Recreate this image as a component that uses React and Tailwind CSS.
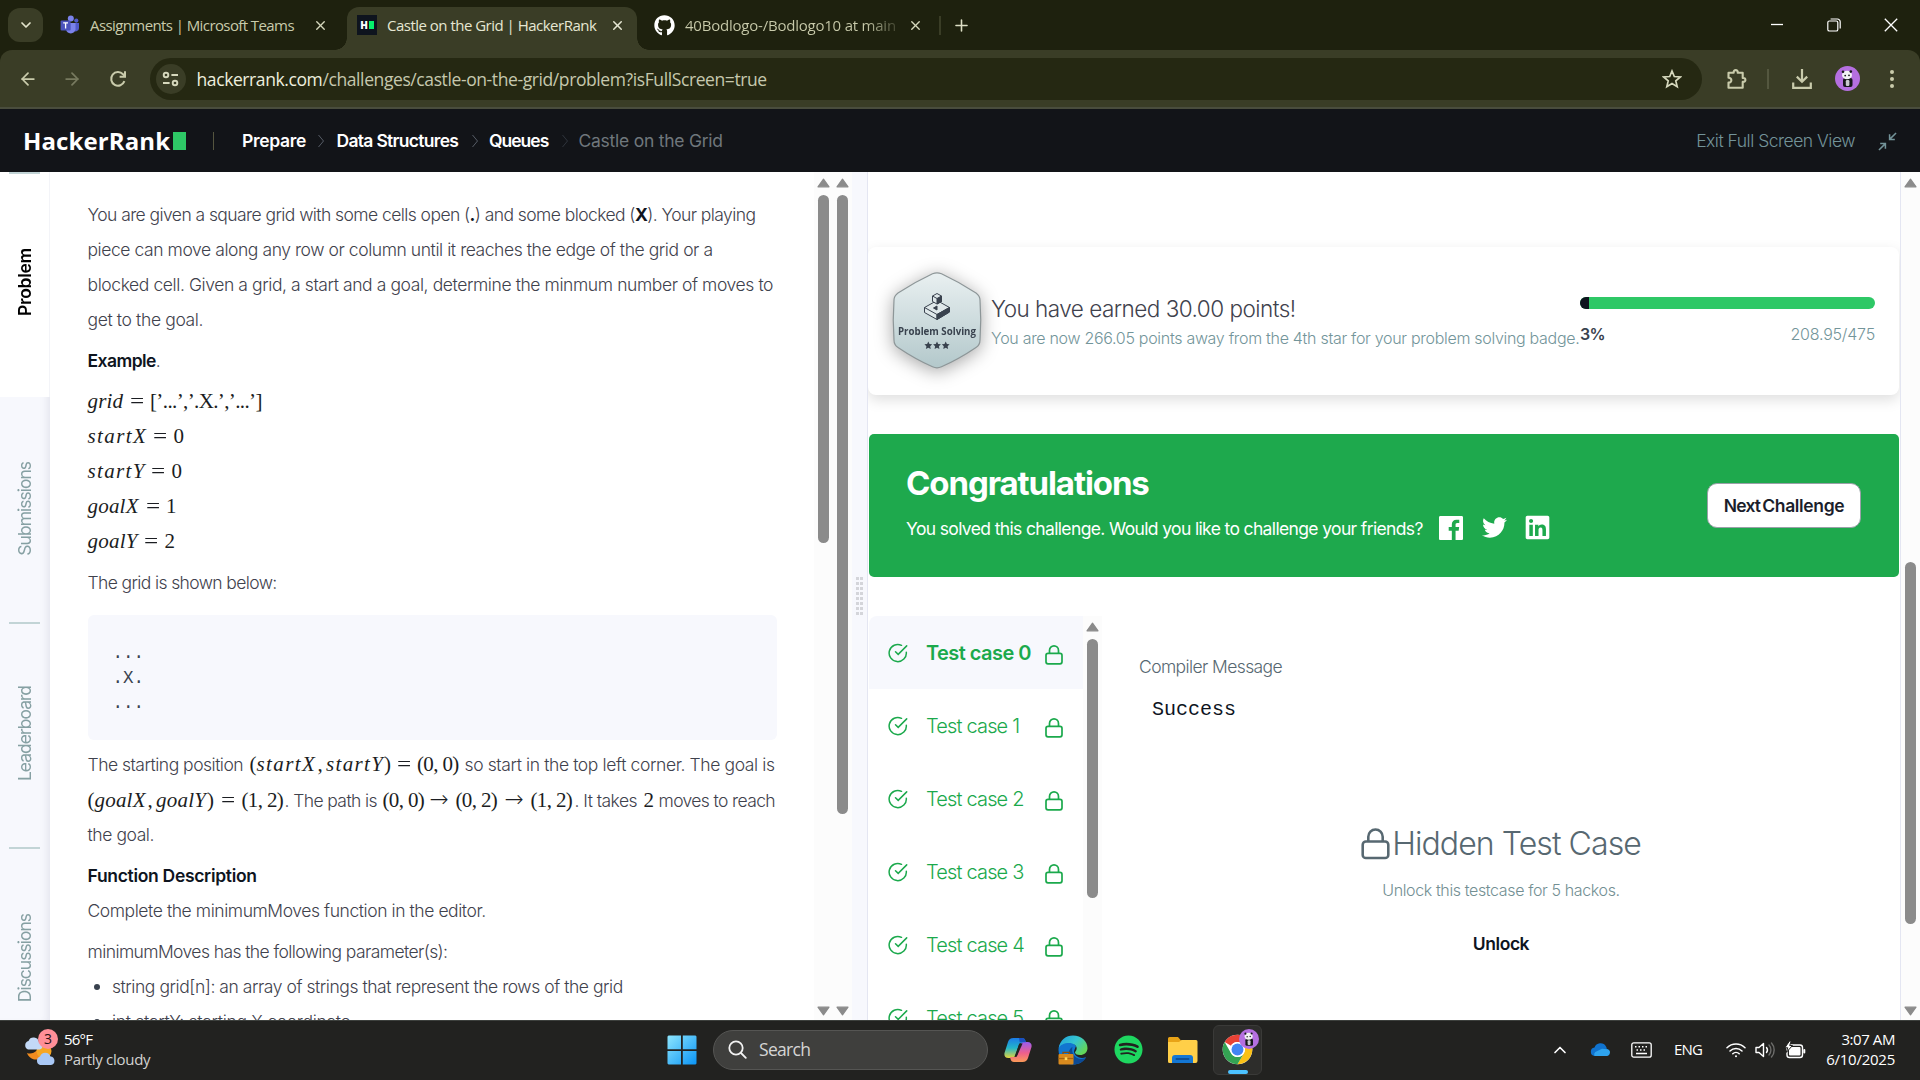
import { ArrowLeft, ArrowRight, ChevronDown, ChevronUp, Plus, X } from "lucide-react";
import { FaGithub, FaLinkedin, FaSpotify, FaTwitter } from "react-icons/fa";

/* ---------- browser chrome ---------- */

function TeamsIcon() {
  return (
    <svg width="20" height="20" viewBox="0 0 20 20">
      <circle cx="16.3" cy="5.6" r="2.1" fill="#5059c9" />
      <circle cx="10.8" cy="3.6" r="3" fill="#7b83eb" />
      <path d="M13 8h6v5.2a3.2 3.2 0 0 1-6 1.6z" fill="#5059c9" />
      <path d="M6 8h9.5v6.3a4.8 4.8 0 0 1-9.5 0z" fill="#7b83eb" />
      <rect x="0.6" y="5.4" width="10" height="10" rx="1" fill="#4b53bc" />
      <path d="M3.2 7.8h4.8M5.6 7.8v5.6" stroke="#fff" strokeWidth="1.3" fill="none" />
    </svg>
  );
}

function HackerFavicon() {
  return (
    <span className="flex h-5 w-5 shrink-0 items-center justify-center gap-px bg-[#0e141e]">
      <span className="font-['Open_Sans',sans-serif] text-[10px] leading-none font-extrabold text-white">H</span>
      <span className="h-2 w-[5px] bg-[#05f26c]" />
    </span>
  );
}

function TabStrip() {
  return (
    <div className="flex h-[50px] shrink-0 items-center bg-[#1e210e] pl-2 font-['Open_Sans','Noto_Sans',sans-serif] text-[15px] text-[#c9cbab]">
      <div className="flex h-[34px] w-[35px] items-center justify-center rounded-xl bg-[#3a3d26]">
        <ChevronDown size={16} strokeWidth={2.6} color="#e3e4cc" />
      </div>
      <div className="flex w-[304px] items-center pl-[17px]">
        <TeamsIcon />
        <span className="ml-[10px] w-[223px] tracking-[-0.59px] whitespace-nowrap">Assignments | Microsoft Teams</span>
        <X size={15} strokeWidth={2.2} className="text-[#d6d8bd]" />
      </div>
      <div className="relative flex h-[43px] w-[290px] items-center self-end rounded-t-xl bg-[#3a3d26] pb-[7px] pl-[10px] text-[#e6e7d3]">
        <span className="absolute bottom-0 -left-3 h-3 w-3 bg-[radial-gradient(circle_at_0_0,transparent_11.5px,#3a3d26_12px)]" />
        <span className="absolute -right-3 bottom-0 h-3 w-3 bg-[radial-gradient(circle_at_100%_0,transparent_11.5px,#3a3d26_12px)]" />
        <HackerFavicon />
        <span className="ml-[10px] w-[223px] tracking-[-0.51px] whitespace-nowrap">Castle on the Grid | HackerRank</span>
        <X size={15} strokeWidth={2.4} />
      </div>
      <div className="flex w-[302px] items-center pl-[17px]">
        <FaGithub size={21} color="#fff" />
        <span className="ml-[10px] w-[223px] overflow-hidden tracking-[-0.22px] whitespace-nowrap">
          <span className="bg-gradient-to-r from-[#c9cbab] from-[180px] to-[#c9cbab]/20 to-[212px] bg-clip-text text-transparent">
            40Bodlogo-/Bodlogo10 at main
          </span>
        </span>
        <X size={15} strokeWidth={2.2} className="text-[#d6d8bd]" />
      </div>
      <div className="h-[19px] w-[2px] bg-[#3a3d26]" />
      <Plus size={19} strokeWidth={2} className="ml-[11px] text-[#dcdec4]" />
      <div className="mr-[22px] ml-auto flex items-center gap-[43px] text-white">
        <svg width="14" height="14" viewBox="0 0 14 14"><path d="M1 6.5h12" stroke="#fff" strokeWidth="1.3" /></svg>
        <svg width="14" height="14" viewBox="0 0 14 14" fill="none" stroke="#fff" strokeWidth="1.2">
          <rect x="0.8" y="3" width="10" height="10" rx="1.6" />
          <path d="M3.6 1h6.8a2.8 2.8 0 0 1 2.8 2.8v6.6" />
        </svg>
        <svg width="14" height="14" viewBox="0 0 14 14"><path d="M.8.8l12.4 12.4M13.2.8L.8 13.2" stroke="#fff" strokeWidth="1.3" /></svg>
      </div>
    </div>
  );
}

function PandaAvatar({ size }) {
  return (
    <svg width={size} height={size} viewBox="0 0 25 25">
      <circle cx="12.5" cy="12.5" r="12.5" fill="#b56fe0" />
      <rect x="8" y="12" width="9.500" height="9" rx="2" fill="#17171b" />
      <rect x="10.800" y="14" width="3.600" height="6" rx="1.200" fill="#c9c9ce" />
      <ellipse cx="12" cy="9" rx="5" ry="4.300" fill="#f2f2f4" />
      <circle cx="8" cy="5.800" r="1.300" fill="#17171b" />
      <circle cx="15.800" cy="5.600" r="1.300" fill="#17171b" />
      <circle cx="10.200" cy="9.600" r=".9" fill="#17171b" />
      <circle cx="14" cy="9.300" r=".9" fill="#17171b" />
    </svg>
  );
}

function Toolbar() {
  return (
    <div className="shrink-0 bg-[#1e210e]">
      <div className="flex h-[59px] items-center rounded-t-xl border-b-2 border-[#4a4d3d] bg-[#3a3d26] text-[#c9cbab]">
        <ArrowLeft size={20} strokeWidth={2.1} className="ml-[18px]" />
        <ArrowRight size={20} strokeWidth={2.1} className="ml-[24px] text-[#777a5f]" />
        <svg width="18" height="18" viewBox="0 0 18 18" className="ml-[27px]" fill="none" stroke="#c9cbab" strokeWidth="2">
          <path d="M15.4 11.2A6.8 6.8 0 1 1 14 4.3l2 2.1" />
          <path d="M16 1.2v5.6h-5.4" />
        </svg>
        <div className="ml-[23px] flex h-[42px] w-[1552px] items-center rounded-full bg-[#252812] pl-[6px]">
          <div className="flex h-[30px] w-[30px] items-center justify-center rounded-full bg-[#3a3d26]">
            <svg width="18" height="16" viewBox="0 0 18 16" fill="none" stroke="#d6d8bd" strokeWidth="1.9">
              <circle cx="4" cy="4" r="2.3" /><path d="M9.4 4H16M1 12h6.6" /><circle cx="13" cy="12" r="2.3" />
            </svg>
          </div>
          <span className="ml-[10.500px] pt-[2px] font-['Open_Sans','Noto_Sans',sans-serif] text-[17.5px] tracking-[-0.4px] whitespace-nowrap text-[#c6c8ae]">
            <span className="text-[#eeefdf]">hackerrank.com</span>/challenges/castle-on-the-grid/problem?isFullScreen=true
          </span>
          <svg width="20" height="20" viewBox="0 0 20 20" className="mr-[20px] ml-auto" fill="none" stroke="#d6d8bd" strokeWidth="1.7">
            <path d="M10 2l2.3 5.5 6 .5-4.5 3.9 1.4 5.8L10 14.6l-5.2 3.1 1.4-5.8L1.700 8l6-.5z" strokeLinejoin="miter" />
          </svg>
        </div>
        <svg width="22" height="22" viewBox="0 0 22 22" className="ml-[24px]" fill="none" stroke="#c9cbab" strokeWidth="2.1" strokeLinejoin="round">
          <path d="M2.500 4.800h5.200c-.6-3.600 4.600-3.600 4 0h5v5.200c3.600-.6 3.600 4.400 0 3.800v6H2.500v-5.200c3.800.2 3.800-5 0-4.800z" />
        </svg>
        <div className="ml-[19px] h-5 w-[2px] bg-[#54573f]" />
        <svg width="20" height="20" viewBox="0 0 20 20" className="ml-[23px]" fill="none" stroke="#c9cbab" strokeWidth="2.2">
          <path d="M10 0v12.500M4.800 7.600L10 12.800l5.200-5.200M1.200 13.500v5.300h17.600v-5.300" />
        </svg>
        <div className="ml-[23px]"><PandaAvatar size={25} /></div>
        <svg width="6" height="20" viewBox="0 0 6 20" className="ml-[29px]" fill="#c9cbab">
          <circle cx="3" cy="3" r="2" /><circle cx="3" cy="10" r="2" /><circle cx="3" cy="17" r="2" />
        </svg>
      </div>
    </div>
  );
}

/* ---------- HackerRank header ---------- */

function Crumb({ className }) {
  return (
    <svg width="14" height="14" viewBox="0 0 14 14" className={"shrink-0 " + className} fill="none" stroke="currentColor" strokeWidth="1">
      <path d="M4.500 1l5 6-5 6" />
    </svg>
  );
}

function SiteHeader() {
  return (
    <header className="flex h-[63px] shrink-0 items-center bg-[#121418] text-[17.5px] leading-[25px] whitespace-nowrap">
      <span className="ml-[23px] w-[150px] font-['Open_Sans',sans-serif] text-[24px] leading-[30px] font-bold tracking-[0.1px] text-white">HackerRank</span>
      <span className="h-[18px] w-[13px] bg-[#2ec866]" />
      <span className="ml-[27px] h-[18px] w-px bg-[#55553f]" />
      <span className="ml-[28px] w-[74px] font-semibold tracking-[-0.3px] text-white">Prepare</span>
      <Crumb className="-ml-[2px] text-[#565c66]" />
      <span className="ml-[8.500px] w-[131px] font-semibold tracking-[-0.7px] text-white">Data Structures</span>
      <Crumb className="text-[#565c66]" />
      <span className="ml-[7.500px] w-[69px] font-semibold tracking-[-1px] text-white">Queues</span>
      <Crumb className="text-[#2f343c]" />
      <span className="ml-[6.500px] tracking-[-0.25px] text-[#6f777c]">Castle on the Grid</span>
      <span className="ml-auto font-light tracking-[-0.5px] text-[#739399]">Exit Full Screen View</span>
      <svg width="19" height="19" viewBox="0 0 20 20" className="mt-[2px] mr-[23px] ml-[23px]" fill="none" stroke="#739399" strokeWidth="1.6">
        <path d="M19 1l-6.500 6.500M12.200 2.300v5.500h5.500M1 19l6.500-6.500M2.300 12.200h5.500v5.500" />
      </svg>
    </header>
  );
}

/* ---------- shared pieces ---------- */

function Arrow({ down }) {
  return (
    <svg width="13" height="10" viewBox="0 0 13 10" className={down ? "rotate-180" : ""}>
      <path d="M6.500 1.200L12 8.800H1z" fill="#8b8b8b" stroke="#8b8b8b" strokeWidth="1.2" strokeLinejoin="round" />
    </svg>
  );
}

function Scrollbar({ offset, length, bottom = true }) {
  return (
    <div className="flex w-[19px] shrink-0 flex-col items-center bg-[#fcfcfc] pt-[6px] pb-[4px]">
      <Arrow />
      <div className="w-[11px] shrink-0 rounded-full bg-[#8b8b8b]" style={{ height: length, marginTop: offset }} />
      {bottom && <div className="mt-auto"><Arrow down /></div>}
    </div>
  );
}

/* ---------- problem statement ---------- */

function SideTabs() {
  const idle = "relative flex h-[225px] shrink-0 items-center justify-center pb-[2px]";
  const label = "[writing-mode:vertical-rl] rotate-180 text-[17.5px] tracking-[-1px] text-[#86a0a3] leading-[20px]";
  const rule = "absolute top-0 left-[8.5px] h-[1.5px] w-[31px] bg-[#c2d4d6]";
  return (
    <nav className="flex w-[50px] shrink-0 flex-col overflow-hidden bg-[#f7f8fd] shadow-[inset_-8px_0_8px_-6px_rgba(40,40,80,0.10)]">
      <div className="relative flex h-[225px] shrink-0 items-center justify-center border-r border-[#f3f4f8] bg-white pb-[4px]">
        <span className={rule} />
        <span className="rotate-180 text-[17.5px] leading-[20px] font-semibold tracking-[-0.3px] text-black [writing-mode:vertical-rl]">Problem</span>
      </div>
      <div className={idle}><span className={label}>Submissions</span></div>
      <div className={idle}><span className={rule} /><span className={label}>Leaderboard</span></div>
      <div className={idle}><span className={rule} /><span className={label}>Discussions</span></div>
    </nav>
  );
}

function Seg({ className = "", it, children }) {
  return (
    <span
      className={
        "inline-block font-['Liberation_Serif',serif] text-[21px] font-normal whitespace-pre text-[#1b1d22] " +
        (it ? "italic " : "") + className
      }
    >
      {children}
    </span>
  );
}

function Eq() {
  return <Seg className="w-[20.500px]"><span className="inline-block origin-left scale-x-120">=</span></Seg>;
}

function To() {
  return (
    <span className="inline-block w-[26px] font-['DejaVu_Sans',sans-serif] text-[23px] font-extralight text-[#1b1d22]">→</span>
  );
}

function ProblemStatement() {
  return (
    <article className="min-w-0 grow overflow-hidden bg-white pt-[25px] pl-[37.500px] text-[17.5px] leading-[35px] font-light whitespace-nowrap text-[#3f424d]">
      <p className="tracking-[-0.57px]">
        You are given a square grid with some cells open (<b className="font-bold text-[#0e141e]">.</b>) and some blocked (
        <b className="font-bold text-[#0e141e]">X</b>). Your playing
      </p>
      <p className="tracking-[-0.43px]">piece can move along any row or column until it reaches the edge of the grid or a</p>
      <p className="tracking-[-0.41px]">blocked cell. Given a grid, a start and a goal, determine the minmum number of moves to</p>
      <p className="tracking-[-0.37px]">get to the goal.</p>

      <p className="mt-[6px] tracking-[-0.55px]"><b className="font-semibold text-[#0e141e]">Example</b>.</p>

      <div className="mt-[6px]">
        <p className="h-[35px]"><Seg it className="w-[42px] tracking-[0.2px]">grid</Seg><Eq /><Seg className="tracking-[-0.62px]">[’...’,’.X.’,’...’]</Seg></p>
        <p className="h-[35px]"><Seg it className="w-[65.500px] tracking-[1.4px]">startX</Seg><Eq /><Seg>0</Seg></p>
        <p className="h-[35px]"><Seg it className="w-[63.500px] tracking-[1.35px]">startY</Seg><Eq /><Seg>0</Seg></p>
        <p className="h-[35px]"><Seg it className="w-[58px] tracking-[0.2px]">goalX</Seg><Eq /><Seg>1</Seg></p>
        <p className="h-[35px]"><Seg it className="w-[56.500px] tracking-[0.25px]">goalY</Seg><Eq /><Seg>2</Seg></p>
      </div>

      <p className="mt-[6px] tracking-[-0.62px]">The grid is shown below:</p>

      <pre className="mt-[15px] h-[125px] w-[689.500px] rounded-md bg-[#f7f8fd] pt-[26px] pl-[25px] font-['Liberation_Mono',monospace] text-[17.5px] leading-[25px] text-[#39424e]">{"...\n.X.\n..."}</pre>

      <p className="mt-[7px] h-[35px]">
        <span className="inline-block w-[162px] tracking-[-0.5px]">The starting position</span>
        <Seg className="w-[7px]">(</Seg><Seg it className="w-[61px] tracking-[1.4px]">startX</Seg><Seg className="w-[8.500px]">,</Seg>
        <Seg it className="w-[58px] tracking-[1.35px]">startY</Seg><Seg className="w-[12.500px]">)</Seg><Eq />
        <Seg className="w-[47.500px] tracking-[-0.65px]">(0, 0)</Seg>
        <span className="tracking-[-0.39px]">so start in the top left corner. The goal is</span>
      </p>
      <p className="h-[35px]">
        <Seg className="w-[7px]">(</Seg><Seg it className="w-[53px] tracking-[0.2px]">goalX</Seg><Seg className="w-[8.500px]">,</Seg>
        <Seg it className="w-[51px] tracking-[0.25px]">goalY</Seg><Seg className="w-[14px]">)</Seg><Eq />
        <Seg className="w-[43px] tracking-[-0.65px]">(1, 2)</Seg>
        <span className="inline-block w-[98px] tracking-[-0.6px]">. The path is</span>
        <Seg className="w-[47px] tracking-[-0.65px]">(0, 0)</Seg><To />
        <Seg className="w-[49px] tracking-[-0.65px]">(0, 2)</Seg><To />
        <Seg className="w-[44px] tracking-[-0.65px]">(1, 2)</Seg>
        <span className="inline-block w-[69px] tracking-[-0.54px]">. It takes</span>
        <Seg className="w-[15px]">2</Seg>
        <span className="tracking-[-0.62px]">moves to reach</span>
      </p>
      <p className="tracking-[-0.42px]">the goal.</p>

      <p className="mt-[6px] font-semibold tracking-[-0.31px] text-[#0e141e]">Function Description</p>
      <p className="tracking-[-0.43px]">Complete the minimumMoves function in the editor.</p>
      <p className="mt-[6px] tracking-[-0.59px]">minimumMoves has the following parameter(s):</p>
      <ul>
        <li className="flex items-center tracking-[-0.45px]">
          <span className="mr-[12.500px] ml-[6px] h-[6px] w-[6px] rounded-full bg-[#39424e]" />
          string grid[n]: an array of strings that represent the rows of the grid
        </li>
        <li className="flex items-center tracking-[-0.32px]">
          <span className="mr-[12.500px] ml-[6px] h-[6px] w-[6px] rounded-full bg-[#39424e]" />
          int startY: starting X coordinate
        </li>
      </ul>
    </article>
  );
}

function Splitter() {
  return (
    <div className="flex w-[16px] shrink-0 items-center justify-center border-r border-[#e4e6f2] bg-[#f7f8fd]">
      <div className="grid grid-cols-2 gap-x-px gap-y-[2px]">
        {Array.from({ length: 16 }, (_, i) => (
          <span key={i} className="h-[3px] w-[3px] bg-[#d4d5da]" />
        ))}
      </div>
    </div>
  );
}

/* ---------- results column ---------- */

function Badge() {
  return (
    <svg width="88" height="97" viewBox="0 0 88 97" className="shrink-0 overflow-visible drop-shadow-[0_3px_9px_rgba(0,0,0,0.35)]">
      <defs>
        <linearGradient id="badge" x1="0" y1="0" x2="0" y2="1">
          <stop offset="0" stopColor="#e9f0f1" />
          <stop offset="1" stopColor="#b3c8cb" />
        </linearGradient>
      </defs>
      <path d="M39.500 1.800Q44 0 48.500 1.800Q66 10 83 21Q87 24 87 28Q88.500 48 87 68Q87 73 83 75.500Q66 87 48.500 94.800Q44 97 39.500 94.800Q22 87 5 75.500Q1 73 1 68Q-.5 48 1 28Q1 24 5 21Q22 10 39.500 1.800z" fill="url(#badge)" stroke="#8d9698" strokeWidth="1.2" />
      <g fill="#dfe8ea" stroke="#39424e" strokeWidth="1" strokeLinejoin="round">
        <path d="M31.500 35.500L44 28.500l12.500 7v4.500L44 47.500l-12.500-7z" />
        <path d="M31.500 35.500L44 42.500l12.500-7M44 42.500v5" fill="none" />
        <path d="M44 42.500l12.500-7v4.500L44 47.500z" fill="#39424e" />
        <path d="M40.500 36l3.500-2v4z" fill="#39424e" />
        <path d="M39.500 24l4.500-2.500 4.500 2.500v5.500L44 32l-4.500-2.500z" />
        <path d="M44 26.500l4.500-2.500v5.500L44 32z" fill="#39424e" />
        <path d="M39.500 24l4.500 2.500" />
      </g>
      <text x="44" y="63" textAnchor="middle" className="fill-[#39424e] font-['Open_Sans',sans-serif] text-[9.7px] font-bold">Problem Solving</text>
      {[35.300, 44, 52.700].map((x) => (
        <path key={x} transform={`translate(${x} 73.300)`} d="M0-3.800l1.200 2.400 2.700.4-2 1.900.5 2.700L0 2.400l-2.400 1.200.5-2.700-2-1.900 2.700-.4z" fill="#39424e" />
      ))}
    </svg>
  );
}

function PointsCard() {
  return (
    <section className="mr-px flex h-[148px] shrink-0 rounded-lg bg-white pl-[24.500px] shadow-[0_5px_14px_rgba(0,0,0,0.13)]">
      <div className="pt-[25px]"><Badge /></div>
      <div className="ml-[10.500px] w-[589px] pt-[47px] whitespace-nowrap">
        <p className="text-[22.5px] leading-[30px] font-light tracking-[-0.52px] text-[#3f424d]">You have earned 30.00 points!</p>
        <p className="mt-px text-[16px] leading-[26px] font-light tracking-[-0.3px] text-[#73959a]">
          You are now 266.05 points away from the 4th star for your problem solving badge.
        </p>
      </div>
      <div className="w-[295px] pt-[50px]">
        <div className="flex h-3 overflow-hidden rounded-full bg-[#2ec866]"><span className="w-[9px] bg-[#0e141e]" /></div>
        <div className="mt-[13px] flex justify-between text-[16px] leading-[24px] tracking-[-0.2px]">
          <span className="font-semibold tracking-[-0.8px] text-[#39424e]">3%</span>
          <span className="font-light text-[#73959a]">208.95/475</span>
        </div>
      </div>
    </section>
  );
}

function Banner() {
  return (
    <section className="mr-px mt-[39px] ml-px flex h-[143px] shrink-0 items-start rounded-[5px] bg-[#1ea94d] pl-[37px] whitespace-nowrap text-white">
      <div className="pt-[28px]">
        <h2 className="text-[33px] leading-[42px] font-bold tracking-[-1.1px]">Congratulations</h2>
        <div className="mt-[10px] flex items-center">
          <p className="w-[533px] text-[17.5px] leading-[24px] tracking-[-0.64px]">You solved this challenge. Would you like to challenge your friends?</p>
          <div className="flex items-center pb-[2px]">
            <svg width="24" height="24" viewBox="0 0 24 24" fill="#fff">
              <path d="M22.675 0H1.325C.593 0 0 .593 0 1.325v21.351C0 23.407.593 24 1.325 24H12.820v-9.294H9.692v-3.622h3.128V8.413c0-3.100 1.893-4.788 4.659-4.788 1.325 0 2.463.099 2.795.143v3.240l-1.918.001c-1.504 0-1.795.715-1.795 1.763v2.313h3.587l-.467 3.622h-3.120V24h6.116c.730 0 1.323-.593 1.323-1.325V1.325C24 .593 23.407 0 22.675 0z" />
            </svg>
            <FaTwitter size={25} className="ml-[19px]" />
            <FaLinkedin size={27} className="ml-[17px]" />
          </div>
        </div>
      </div>
      <button className="mt-[49px] mr-[38px] ml-auto flex h-[45px] w-[154px] items-center justify-center gap-[2px] rounded-[10px] border border-[#9aa0a8] bg-white pt-px text-[17.5px] font-semibold tracking-[-0.35px] text-[#1b1e2b]">
        <span className="tracking-[-0.8px]">Next</span>
        <span>Challenge</span>
      </button>
    </section>
  );
}

function LockIcon({ width, height, stroke }) {
  return (
    <svg width={width} height={height} viewBox="0 0 18 20" fill="none" stroke="currentColor" strokeWidth={stroke} className="shrink-0">
      <rect x="1" y="8.400" width="16" height="10.400" rx="2" />
      <path d="M4.500 8.400V5.400a4.500 4.500 0 0 1 9 0v3" />
    </svg>
  );
}

function TestCase({ n, active }) {
  return (
    <div className={"flex h-[73px] shrink-0 items-center pl-[19px] text-[#1ba94c] " + (active ? "rounded-tl-lg bg-[#f7f8fd]" : "")}>
      <svg width="20" height="20" viewBox="0 0 20 20" fill="none" stroke="currentColor" strokeWidth="1.500" strokeLinecap="round" className="shrink-0">
        <path d="M18.300 9.200a8.600 8.600 0 1 1-4.800-6.900" />
        <path d="M7.500 8.700l2.700 2.700 8.500-8.500" />
      </svg>
      <span
        className={
          "ml-[18px] w-[119px] text-[20px] leading-[30px] whitespace-nowrap " +
          (active ? "font-semibold tracking-[-0.56px]" : "font-light tracking-[-0.84px]")
        }
      >
        Test case {n}
      </span>
      <span className="mt-[5px]"><LockIcon width={18} height={20} stroke={1.7} /></span>
    </div>
  );
}

function TestResults() {
  return (
    <section className="mt-[39px] ml-px flex min-h-0 grow basis-0 overflow-hidden">
      <div className="flex w-[214px] shrink-0 flex-col overflow-hidden">
        {[0, 1, 2, 3, 4, 5].map((n) => (
          <TestCase key={n} n={n} active={n === 0} />
        ))}
      </div>
      <Scrollbar offset={7} length={259} bottom={false} />
      <div className="grow bg-white pl-[37px] whitespace-nowrap">
        <p className="mt-[38px] text-[17.5px] leading-[25px] font-light tracking-[-0.6px] text-[#576871]">Compiler Message</p>
        <p className="mt-[18px] ml-[13px] font-['Liberation_Mono',monospace] text-[20px] leading-[25px] text-[#0e141e]">Success</p>
        <div className="mt-[100px] flex flex-col items-center pr-[37px]">
          <h3 className="flex items-center text-[32px] leading-[44px] font-light tracking-[-0.92px] text-[#576871]">
            <span className="mr-[2px]"><LockIcon width={29} height={32} stroke={1.6} /></span>
            Hidden Test Case
          </h3>
          <p className="mt-[12px] text-[16px] leading-[24px] font-light tracking-[-0.37px] text-[#738f93]">Unlock this testcase for 5 hackos.</p>
          <p className="mt-[29px] text-[17.5px] leading-[25px] font-semibold tracking-[-0.45px] text-[#0e141e]">Unlock</p>
        </div>
      </div>
    </section>
  );
}

/* ---------- taskbar ---------- */

function WeatherIcon() {
  return (
    <span className="relative h-[36px] w-[36px] shrink-0">
      <svg width="36" height="36" viewBox="0 0 36 36">
        <path d="M17 10a9.500 9.500 0 1 1-14 11c6 2 12-2 14-11z" fill="#f28c1f" />
        <circle cx="20" cy="19" r="7.500" fill="#f6a623" />
        <path d="M4 17.500a4.500 4.500 0 0 1 .5-8.500 5.500 5.500 0 0 1 10.500 1 3.800 3.800 0 0 1 .5 7.500z" fill="#c3d9f7" />
        <path d="M16 33a4.500 4.500 0 0 1 0-8.500 5.500 5.500 0 0 1 10.500 0 4.300 4.300 0 0 1 .5 8.500z" fill="#a9c8f5" />
      </svg>
      <span className="absolute -top-[3px] left-[14px] flex h-5 w-5 items-center justify-center rounded-full bg-[#ff8f98] text-[14px] leading-none text-[#2a1215]">3</span>
    </span>
  );
}

function StartIcon() {
  return (
    <svg width="30" height="30" viewBox="0 0 30 30" className="shrink-0">
      <defs>
        <linearGradient id="win" x1="0" y1="0" x2="1" y2="1">
          <stop offset="0" stopColor="#8ee6fd" />
          <stop offset="1" stopColor="#0a94f5" />
        </linearGradient>
      </defs>
      <path d="M1.500.5H14v13.800H.5V1.500zM15.800.5h12.700l1 1v12.800H15.800zM.5 16H14v13.500H1.500l-1-1zM15.800 16h13.700v12.500l-1 1H15.800z" fill="url(#win)" />
    </svg>
  );
}

function CopilotIcon() {
  return (
    <svg width="30" height="30" viewBox="0 0 30 30" className="shrink-0">
      <defs>
        <linearGradient id="cpA" x1="0" y1="0" x2="0" y2="1">
          <stop offset="0" stopColor="#1b7be8" /><stop offset=".5" stopColor="#23b6c9" /><stop offset="1" stopColor="#e5d53b" />
        </linearGradient>
        <linearGradient id="cpB" x1="0" y1="0" x2="0" y2="1">
          <stop offset="0" stopColor="#9a5cf0" /><stop offset=".55" stopColor="#ee5f8c" /><stop offset="1" stopColor="#fb9a57" />
        </linearGradient>
      </defs>
      <path d="M10.500 3h8.500c2 0 3 1.200 3.500 3l.6 2H19c-2 0-3 1-3.500 2.800L12.600 20c-.7 2-1.800 3-3.800 3H5.500C2 23 1 20.500 1.500 18L5 7c.9-2.800 2.500-4 5.500-4z" fill="url(#cpA)" />
      <path d="M19.500 27H11c-2 0-3-1.200-3.500-3L7 22h4c2 0 3-1 3.500-2.800L17.400 10c.7-2 1.800-3 3.800-3h3.300c3.500 0 4.500 2.500 4 5L25 23c-.9 2.800-2.500 4-5.500 4z" fill="url(#cpB)" />
      <path d="M16.400 8.500h3.200l-5.900 13.200h-2.200z" fill="#232220" />
      <path d="M19 3c2 0 3 1.200 3.500 3l.4 1.200h-6.200L16 3z" fill="#1a4fc0" />
    </svg>
  );
}

function EdgeIcon() {
  return (
    <svg width="30" height="30" viewBox="0 0 30 30" className="shrink-0">
      <defs>
        <linearGradient id="edA" x1="0" y1="0" x2="1" y2=".6">
          <stop offset="0" stopColor="#1f9fdc" /><stop offset=".55" stopColor="#36c6cf" /><stop offset="1" stopColor="#63d65a" />
        </linearGradient>
      </defs>
      <path d="M.5 15C.5 7 7 3 13 5l5 6-2 5c0 4 4 7 8 7 1.500 0 2.800-.4 4-1C25.500 27 20.500 29.500 15 29.500 7 29.500.5 23 .5 15z" fill="#1276d0" />
      <path d="M.8 13C2 5 8 .5 15 .5c8.500 0 14.500 6 14.500 12.500 0 4.500-3.500 7-7.500 7-3.500 0-5-1.500-5-2.500s1.700-1.800 1.700-4.200c0-3-3-5.300-7.700-5.300C6 8 2 10 .8 13z" fill="url(#edA)" />
      <path d="M10.500 21c-.5-4 1.500-8 4-9-1.500 5 1.500 11.500 8 12 2.500.2 4.500-.6 5.500-1.200C25.500 27 20.500 29.500 15 29.500c-2.500-1-4-4.500-4.500-8.500z" fill="#0c4a95" />
      <rect x=".5" y="19" width="15" height="10.500" rx="1" fill="#d98a1e" />
      <path d="M5 19v-1.700h6.500V19" fill="none" stroke="#8a4f0c" strokeWidth="1.300" />
      <path d="M.5 23.500h15" stroke="#a7640f" strokeWidth="1.200" />
      <rect x="6.700" y="22.300" width="2.600" height="2.800" fill="#ffd75e" />
    </svg>
  );
}

function FolderIcon() {
  return (
    <svg width="31" height="28" viewBox="0 0 31 28" className="shrink-0">
      <path d="M1 2.500A1.500 1.500 0 0 1 2.500 1H11l3 3.500v5H1z" fill="#e8a317" />
      <path d="M1 6h11l2.500-2H29a1.500 1.500 0 0 1 1.500 1.500V25a2 2 0 0 1-2 2h-26A1.500 1.500 0 0 1 1 25.500z" fill="#ffcf48" />
      <path d="M5 27v-5a3 3 0 0 1 3-3h15a3 3 0 0 1 3 3v5z" fill="#1477d4" />
      <path d="M9.500 23h12" stroke="#0b4f99" strokeWidth="2" strokeLinecap="round" />
    </svg>
  );
}

function ChromeIcon() {
  return (
    <svg width="31" height="31" viewBox="0 0 48 48">
      <circle cx="24" cy="24" r="23" fill="#fff" />
      <path d="M24 1a23 23 0 0 1 19.900 11.500H24A11.500 11.500 0 0 0 14 18.200L4.100 12.500A23 23 0 0 1 24 1z" fill="#e94235" />
      <path d="M43.900 12.500A23 23 0 0 1 24 47l9.960-17.250A11.500 11.500 0 0 0 34 18.200 11.500 11.500 0 0 0 24 12.500z" fill="#fbc116" />
      <path d="M4.100 12.500L14 29.750A11.500 11.500 0 0 0 24 35.500a11.500 11.500 0 0 0 9.960-5.750L24 47A23 23 0 0 1 4.100 12.500z" fill="#34a353" />
      <circle cx="24" cy="24" r="11.500" fill="#fff" />
      <circle cx="24" cy="24" r="9.200" fill="#4285f4" />
    </svg>
  );
}

function Tray() {
  return (
    <div className="mr-[24px] ml-auto flex items-center">
      <ChevronUp size={20} strokeWidth={2} className="text-white" />
      <svg width="21" height="15" viewBox="0 0 21 15" className="ml-[20px]">
        <path d="M4.500 14a4.300 4.300 0 0 1 0-8.500A6.300 6.300 0 0 1 16 4.500c.5 1 .8 1.800.8 2.500a3.600 3.600 0 0 1 0 7z" fill="#1073cf" />
        <path d="M4.500 14a3.500 3.500 0 0 1 .8-4L12 6.800l5.500.4a3.500 3.500 0 0 1-.5 6.800z" fill="#2ea3ee" />
      </svg>
      <svg width="21" height="16" viewBox="0 0 21 16" className="ml-[20px]" fill="none" stroke="#fff" strokeWidth="1.300">
        <rect x=".8" y=".8" width="19.400" height="14.400" rx="2" />
        <path d="M4 4.800h1.500M7.500 4.800H9M11 4.800h1.500M14.500 4.800H16M5.500 8H7M9 8h1.500M12.500 8H14M5 11.500h11" strokeWidth="1.600" />
      </svg>
      <span className="ml-[22px] w-[30px] tracking-[-0.77px]">ENG</span>
      <svg width="20" height="16" viewBox="0 0 20 16" className="ml-[22px]" fill="none" stroke="#fff" strokeWidth="1.500" strokeLinecap="round">
        <path d="M1 5.800a12.800 12.800 0 0 1 18 0M4 9a8.500 8.500 0 0 1 12 0M6.800 11.800a4.600 4.600 0 0 1 6.400 0" />
        <circle cx="10" cy="14.300" r="1" fill="#fff" stroke="none" />
      </svg>
      <svg width="20" height="16" viewBox="0 0 20 16" className="ml-[9px]" fill="none" stroke="#fff" strokeWidth="1.400" strokeLinejoin="round" strokeLinecap="round">
        <path d="M1 5.500h3L8.500 1.500v13L4 10.500H1z" />
        <path d="M11.500 5.500a4 4 0 0 1 0 5" />
        <path d="M14 3a7.500 7.500 0 0 1 0 10M16.500 1a10.500 10.500 0 0 1 0 14" stroke="#6d6d6b" />
      </svg>
      <svg width="22" height="18" viewBox="0 0 22 18" className="ml-[9px]">
        <rect x="3" y="4" width="15.500" height="12.500" rx="2.500" fill="none" stroke="#fff" strokeWidth="1.400" />
        <rect x="5" y="6" width="11.500" height="8.500" rx="1" fill="#fff" />
        <rect x="19.300" y="8" width="2" height="4.500" rx="1" fill="#fff" />
        <path d="M5.500 0L.8 6.800h3L2.200 11.500 8.500 4.500H5.700L7.200 0z" fill="#fff" stroke="#222220" strokeWidth="1" />
      </svg>
      <div className="ml-[18px] w-[72px] pr-px pb-[2px] text-right leading-5">
        <p className="tracking-[-0.42px]">3:07 AM</p>
        <p className="tracking-[-0.25px] whitespace-nowrap">6/10/2025</p>
      </div>
    </div>
  );
}

function Taskbar() {
  return (
    <footer className="flex h-[60px] shrink-0 items-center border-t border-[#3d403d] bg-[#222220] pb-[2px] font-['Open_Sans','Noto_Sans',sans-serif] text-[15px] text-white">
      <div className="flex w-[667px] items-center pl-[24px]">
        <WeatherIcon />
        <div className="ml-[4px] pb-[2px] leading-5">
          <p className="tracking-[-0.78px]">56°F</p>
          <p className="tracking-[-0.28px] text-[#d2d2d1]">Partly cloudy</p>
        </div>
      </div>
      <StartIcon />
      <div className="ml-[16px] flex h-10 w-[275px] items-center rounded-full border border-[#555553] bg-[#3f3f3d] pl-[14px]">
        <svg width="19" height="19" viewBox="0 0 19 19" fill="none" stroke="#f2f2f2" strokeWidth="1.800" strokeLinecap="round">
          <circle cx="8" cy="8" r="6.700" /><path d="M13 13l4.800 4.800" />
        </svg>
        <span className="ml-[12px] text-[17.5px] tracking-[-0.68px] text-[#d5d5d4]">Search</span>
      </div>
      <div className="ml-[15px] flex items-center">
        <CopilotIcon />
        <span className="ml-[25px]"><EdgeIcon /></span>
        <FaSpotify size={29} color="#1ed760" className="ml-[26px]" />
        <span className="ml-[24px]"><FolderIcon /></span>
      </div>
      <div className="relative ml-[15px] flex h-[50px] w-[49px] items-center rounded-md border border-[#3a3a38] bg-[#2d2d2b] pl-[8px]">
        <ChromeIcon />
        <span className="absolute top-[3px] left-[25px]"><PandaAvatar size={20} /></span>
        <span className="absolute bottom-0 left-[14px] h-[4px] w-5 rounded-full bg-[#4cc2ff]" />
      </div>
      <Tray />
    </footer>
  );
}

export default function App() {
  return (
    <div className="flex h-[1080px] w-[1920px] flex-col overflow-hidden bg-white font-['Inter','Liberation_Sans',sans-serif]">
      <TabStrip />
      <Toolbar />
      <SiteHeader />
      <main className="flex min-h-0 grow basis-0">
        <SideTabs />
        <ProblemStatement />
        <Scrollbar offset={7} length={348} />
        <Scrollbar offset={7} length={619} />
        <Splitter />
        <div className="flex w-[1033px] shrink-0 flex-col overflow-hidden border-r border-[#e4e6f2] bg-white pt-[75px]">
          <PointsCard />
          <Banner />
          <TestResults />
        </div>
        <Scrollbar offset={374} length={362} />
      </main>
      <Taskbar />
    </div>
  );
}
